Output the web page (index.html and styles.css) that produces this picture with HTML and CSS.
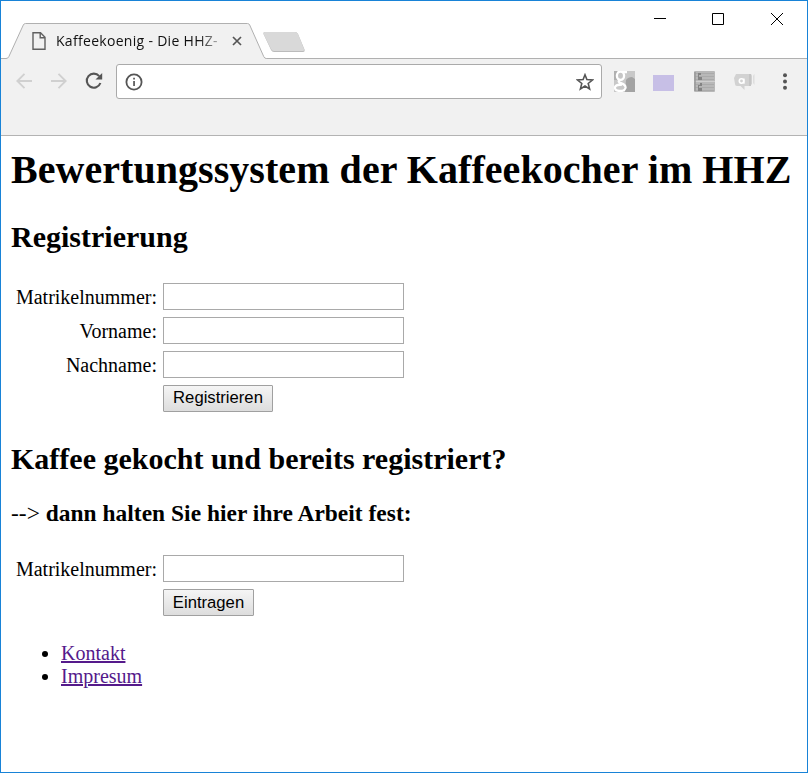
FILE: index.html
```html
<!DOCTYPE html>
<html lang="de">
<head>
<meta charset="utf-8">
<title>Kaffeekoenig - Die HHZ-</title>
<link rel="stylesheet" href="styles.css">
</head>
<body>
<div class="window">
  <div class="tabstrip">
    <svg class="tab-shape" width="310" height="36" viewBox="0 0 310 36">
      <defs><filter id="soft" x="-10%" y="-20%" width="120%" height="140%"><feGaussianBlur stdDeviation="0.5"/></filter></defs>
      <path d="M0 35.5H5Q7 35.5 7.8 33.7L22.3 2Q23 .5 24.5 .5H246.5Q248 .5 248.7 2L262.8 33.7Q263.6 35.5 265.5 35.5H310V36H0Z" fill="#f1f1f1"/>
      <path d="M0 35.5H5Q7 35.5 7.8 33.7L22.3 2Q23 .5 24.5 .5H246.5Q248 .5 248.7 2L262.8 33.7Q263.6 35.5 265.5 35.5H310" fill="none" stroke="#b0b0b0"/>
      <path d="M264 9H294Q296 9 297 11L303.5 26.5Q304 29 302 29H273Q271 29 270 27L262.500 11Q262 9 264 9Z" fill="#bbb" filter="url(#soft)"/>
      <path d="M264 9H294Q296 9 297 11L303 26Q303.500 28 302 28H273Q271 28 270 26L262.500 11Q262 9 264 9Z" fill="#d9d9d9"/>
    </svg>
    <div class="tab">
      <svg class="page-icon" width="14" height="18" viewBox="0 0 14 18" fill="none" stroke="#606060" stroke-width="1.4"><path d="M1 .8H8.500L13 5.300V17.200H1ZM8.200 1V5.700H13"/></svg>
      <span class="tab-title">Kaffeekoenig - Die HHZ-</span>
      <svg width="10" height="10" viewBox="0 0 10 10" stroke="#555" stroke-width="1.7"><path d="M1 1 9 9M9 1 1 9"/></svg>
    </div>
    <div class="controls">
      <svg width="12" height="12" viewBox="0 0 12 12" stroke="#000"><path d="M0 5.500H12"/></svg>
      <svg width="12" height="12" viewBox="0 0 12 12" fill="none" stroke="#000"><path d="M.5 .5H11.500V11.500H.5Z"/></svg>
      <svg width="12" height="12" viewBox="0 0 12 12" stroke="#000"><path d="M0 0 12 12M12 0 0 12"/></svg>
    </div>
  </div>
  <div class="toolbar">
    <svg class="nav" width="16" height="16" viewBox="0 0 16 16" fill="none" stroke="#d0d0d0" stroke-width="1.900"><path d="M16 8H1.500M8.500 .8 1.300 8 8.500 15.200"/></svg>
    <svg class="nav forward" width="16" height="16" viewBox="0 0 16 16" fill="none" stroke="#d0d0d0" stroke-width="1.900"><path d="M0 8H14.500M7.500 .8 14.700 8 7.500 15.200"/></svg>
    <svg class="nav reload" width="18" height="18" viewBox="0 0 18 18"><path d="M14.200 4.200A7 7 0 1 0 15.400 11" fill="none" stroke="#555" stroke-width="2.100"/><path d="M17.200 1V7.500H10.500Z" fill="#555"/></svg>
    <div class="address">
      <svg width="18" height="18" viewBox="0 0 18 18"><circle cx="9" cy="9" r="7.600" fill="none" stroke="#555" stroke-width="1.800"/><path d="M8.200 4.800H9.900V6.500H8.200ZM8.200 8H9.900V13H8.200Z" fill="#555"/></svg>
      <svg width="18" height="18" viewBox="0 0 18 18"><path d="M9 1.800 10.900 6.600 16.500 7 12.200 10.500 13.600 15.900 9 13 4.400 15.900 5.800 10.500 1.500 7 7.100 6.600Z" fill="none" stroke="#555" stroke-width="1.600"/></svg>
    </div>
    <svg class="ext google" width="21" height="21" viewBox="0 0 21 21"><path d="M0 0H21V21H0Z" fill="#c8c8c8"/><path d="M12 9Q14 6 18 6L21 8V21H11Z" fill="#a3a3a3"/><path d="M0 0H3V9H0Z" fill="#b0b0b0"/><ellipse cx="6.500" cy="4.700" rx="3.600" ry="4.200" fill="#c6c6c6" stroke="#fff" stroke-width="2.300"/><path d="M9 1.200H13M6 8.500Q3 11 7 12.200 12 14 11.500 17 10.500 20.300 5.500 20 .5 19.500 1 16.200 2 13.500 8 13.500" fill="none" stroke="#fff" stroke-width="2.300"/></svg>
    <svg class="ext violet" width="21" height="16" viewBox="0 0 21 16"><path d="M0 0H21V16H0Z" fill="#c7bfe6"/></svg>
    <svg class="ext sheet" width="21" height="21" viewBox="0 0 21 21"><rect width="21" height="21" rx="1" fill="#b8b8b8"/><path d="M1 2.500H20M1 5.500H20M1 8.500H20M1 13.500H20M1 16.500H20M1 19.500H20" stroke="#aaa"/><path d="M0 10.500H21" stroke="#cfcfcf"/><path d="M4 2H7V4H5V6H8V9H4ZM6 12H8V15H5V17H8V20H4V14H6Z" fill="#838383"/><path d="M1 1V20" stroke="#999" stroke-width="1.500"/></svg>
    <svg class="ext chat" width="21" height="17" viewBox="0 0 21 17"><path d="M2 1H16Q18 1 18 3V11L16 13H10.500V17L6.500 13H3Q1 13 1 11L0 5Z" fill="#d2d2d2"/><path d="M15 1H17V13H15Z" fill="#c5c5c5"/><path d="M19 2.500 20.500 1V12L19 10Z" fill="#dedede"/><circle cx="7.500" cy="8" r="2.200" fill="none" stroke="#fff" stroke-width="1.600"/><path d="M10 5.500V10.700" stroke="#fff" stroke-width="1.300"/></svg>
    <svg class="ext menu" width="4" height="17" viewBox="0 0 4 17" fill="#555"><circle cx="2" cy="2.200" r="2"/><circle cx="2" cy="8.500" r="2"/><circle cx="2" cy="14.700" r="2"/></svg>
  </div>
  <main>
    <h1>Bewertungssystem der Kaffeekocher im HHZ</h1>
    <h2>Registrierung</h2>
    <form class="fields register">
      <label for="nr">Matrikelnummer:</label><input id="nr" type="text">
      <label for="vorname">Vorname:</label><input id="vorname" type="text">
      <label for="nachname">Nachname:</label><input id="nachname" type="text">
      <button type="button">Registrieren</button>
    </form>
    <h2 class="second">Kaffee gekocht und bereits registriert?</h2>
    <h3><span class="arrow">--&gt;</span> dann halten Sie hier ihre Arbeit fest:</h3>
    <form class="fields">
      <label for="nr2">Matrikelnummer:</label><input id="nr2" type="text">
      <button type="button" class="enter">Eintragen</button>
    </form>
    <ul>
      <li><a href="#kontakt">Kontakt</a></li>
      <li><a href="#impresum">Impresum</a></li>
    </ul>
  </main>
</div>
</body>
</html>
```
FILE: styles.css
```css
* { box-sizing: border-box; }
body { margin: 0; background: #fff; }
svg { display: block; flex: none; }
.window { width: 808px; height: 773px; border: 1px solid #1883d7; overflow: hidden; }
.tabstrip { position: relative; height: 58px; display: flex; justify-content: space-between; border-bottom: 1px solid #b0b0b0; }
.tab-shape { position: absolute; left: 0; top: 22px; }
.tab { position: relative; display: flex; align-items: center; margin: 23px 0 0 31px; height: 34px; width: 210px; }
.tab-title { font: 14px/20px "Open Sans", sans-serif; letter-spacing: .3px; width: 166px; margin: 0 10px 0 10px; white-space: nowrap; color: #111; -webkit-mask-image: linear-gradient(to right, #000 142px, transparent 172px); mask-image: linear-gradient(to right, #000 142px, transparent 172px); }
.controls { display: flex; margin: 12px 24px 0 0; }
.controls svg + svg { margin-left: 46px; }
.controls svg:last-child { margin-left: 47px; }
.toolbar { height: 77px; background: #f1f1f1; border-bottom: 1px solid #b3b3b3; display: flex; align-items: flex-start; }
.nav { margin: 14px 0 0 15px; }
.forward { margin-left: 19px; }
.reload { margin: 13px 0 0 18px; }
.address { width: 486px; height: 35px; margin: 5px 0 0 13px; border: 1px solid #aaa; border-radius: 3px; background: #fff; display: flex; align-items: center; justify-content: space-between; padding: 1px 7px 0 8px; }
.google { margin: 12px 0 0 12px; }
.violet { margin: 16px 0 0 18px; }
.sheet { margin: 12px 0 0 20px; }
.chat { margin: 14px 0 0 19px; }
.menu { margin: 14px 0 0 28px; }
main { padding: 11px 10px 0; font: 20px/23px "Liberation Serif", serif; color: #000; }
h1, h2, h3 { margin: 0; white-space: nowrap; }
h1 { font-size: 40px; line-height: 46px; letter-spacing: .05px; }
h2 { font-size: 30px; line-height: 34px; margin-top: 27px; }
h3 { font-size: 23.4px; line-height: 26px; margin-top: 24px; letter-spacing: .04px; }
.arrow { font-weight: 400; }
.fields { display: grid; grid-template-columns: 146px 241px; grid-auto-rows: 27px; column-gap: 6px; row-gap: 7px; margin-top: 29px; align-items: center; }
label { text-align: right; font-size: 20px; padding-top: 2px; }
input { width: 241px; height: 27px; border: 1px solid #a9a9a9; padding: 0; background: #fff; }
button { grid-column: 2; justify-self: start; width: 110px; height: 27px; padding: 0 0 1px; border: 1px solid #a0a0a0; border-radius: 1px; background: linear-gradient(#f5f5f5, #dddddd); font: 16.67px/20px "Liberation Sans", sans-serif; color: #000; }
.enter { width: 91px; padding-bottom: 0; }
.second { margin-top: 30px; }
ul { margin: 26px 0 0; padding-left: 50px; }
a { color: #551a8b; text-decoration-thickness: 2px; }
```
